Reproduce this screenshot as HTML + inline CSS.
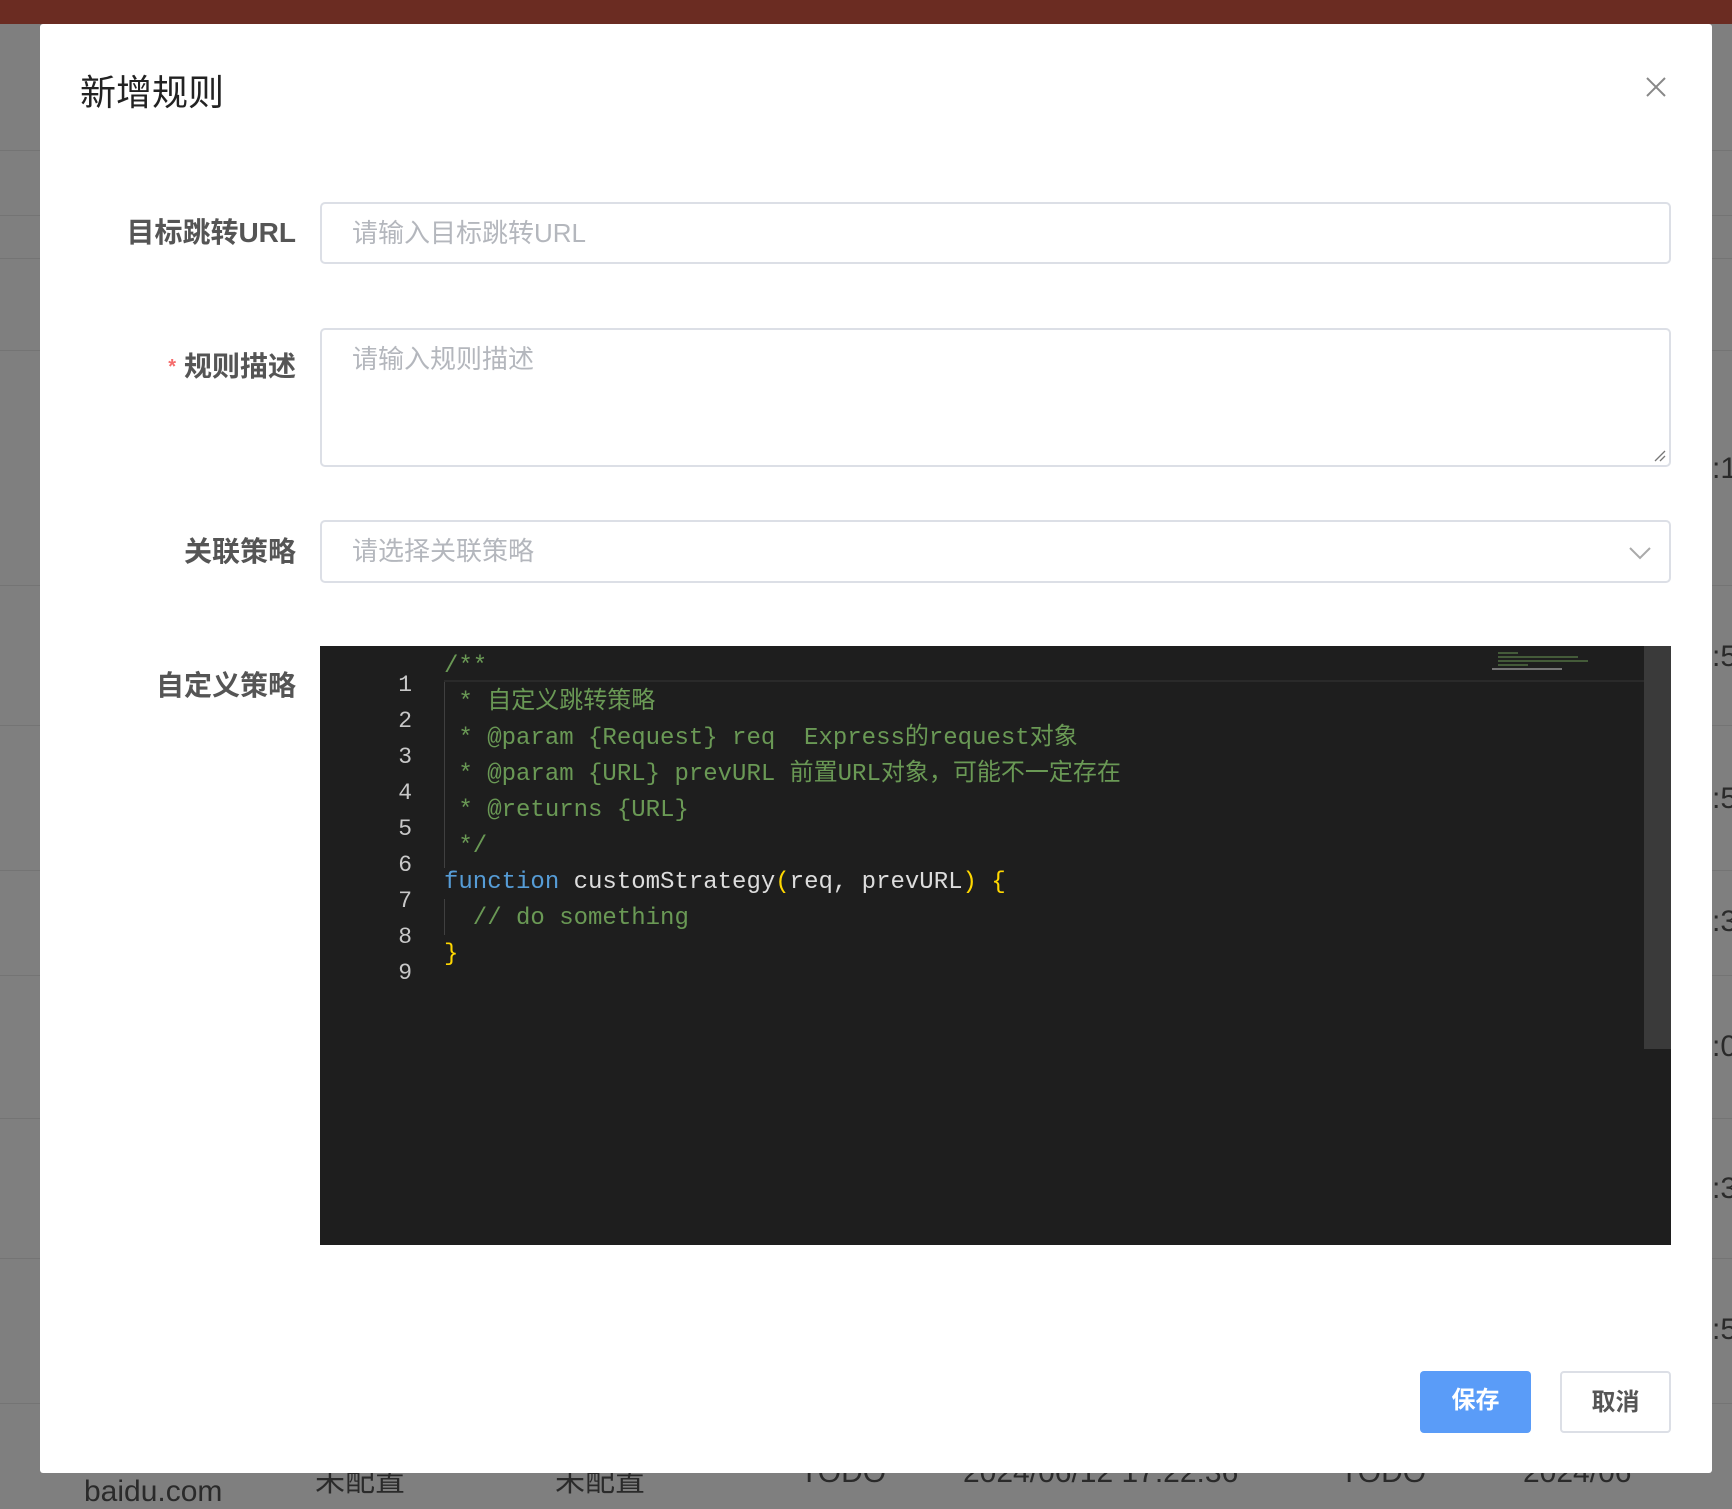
<!DOCTYPE html>
<html><head><meta charset="utf-8"><style>
*{margin:0;padding:0;box-sizing:border-box}
body{width:1732px;height:1498px;background:#7f7f7f;position:relative;overflow:hidden;font-family:"Liberation Sans","Noto Sans CJK SC",sans-serif}
.topbar{position:absolute;left:0;top:0;width:1732px;height:24px;background:#6b2c22}
.bgt{position:absolute;color:#2a2a2a;font-size:30px}
.hl{position:absolute;left:0;width:1732px;height:1px;background:#747474}
.modal{position:absolute;left:40px;top:24px;width:1672px;height:1449px;background:#fff;border-radius:3px}
.title{position:absolute;left:80px;top:64px;font-size:36px;color:#222}
.close{position:absolute;left:1645px;top:76px}
.lbl{position:absolute;right:1436px;font-size:28px;font-weight:bold;color:#555;white-space:nowrap;line-height:36px}
.lbl .s{color:#f56c6c;font-size:20px;margin-right:8px;vertical-align:3px}
.inp{position:absolute;left:320px;width:1351px;border:2px solid #dcdfe6;border-radius:5px;background:#fff}
.ph{position:absolute;left:30px;font-size:26px;color:#b4b7bd;white-space:nowrap;line-height:34px}
.ed{position:absolute;left:320px;top:646px;width:1351px;height:599px;background:#1e1e1e;overflow:hidden}
.ln{position:absolute;left:0;width:92px;text-align:right;font-family:"Liberation Mono",monospace;font-size:23px;color:#c8c8c8;line-height:36px}
.cl{position:absolute;left:124px;font-family:"Liberation Mono","Noto Sans CJK SC",monospace;font-size:24px;color:#6a9955;white-space:pre;line-height:36px;height:36px}
.btn{position:absolute;top:1371px;height:62px;width:111px;border-radius:4px;font-size:24px;font-weight:bold;text-align:center;line-height:60px}
</style></head><body>
<div class="topbar"></div>
<div class="hl" style="top:150px"></div><div class="hl" style="top:215px"></div><div class="hl" style="top:258px"></div>
<div class="hl" style="top:350px"></div><div class="hl" style="top:585px"></div><div class="hl" style="top:725px"></div>
<div class="hl" style="top:870px"></div><div class="hl" style="top:975px"></div><div class="hl" style="top:1118px"></div>
<div class="hl" style="top:1258px"></div><div class="hl" style="top:1403px"></div>
<div class="bgt" style="left:1712px;top:452px">:1</div>
<div class="bgt" style="left:1712px;top:640px">:5</div>
<div class="bgt" style="left:1712px;top:782px">:5</div>
<div class="bgt" style="left:1712px;top:905px">:3</div>
<div class="bgt" style="left:1712px;top:1030px">:0</div>
<div class="bgt" style="left:1712px;top:1172px">:3</div>
<div class="bgt" style="left:1712px;top:1313px">:5</div>
<div class="bgt" style="left:84px;top:1475px">baidu.com</div>
<div class="bgt" style="left:315px;top:1456px">未配置</div>
<div class="bgt" style="left:555px;top:1456px">未配置</div>
<div class="bgt" style="left:800px;top:1456px">TODO</div>
<div class="bgt" style="left:963px;top:1456px">2024/06/12 17:22:36</div>
<div class="bgt" style="left:1340px;top:1456px">TODO</div>
<div class="bgt" style="left:1523px;top:1456px">2024/06</div>
<div class="modal"></div>
<div class="title">新增规则</div>
<svg class="close" width="22" height="22" viewBox="0 0 22 22"><path d="M2 2L20 20M20 2L2 20" stroke="#888" stroke-width="2"/></svg>

<div class="lbl" style="top:215px">目标跳转URL</div>
<div class="inp" style="top:202px;height:62px"><div class="ph" style="top:12px">请输入目标跳转URL</div></div>

<div class="lbl" style="top:349px"><span class="s">*</span>规则描述</div>
<div class="inp" style="top:328px;height:139px"><div class="ph" style="top:12px">请输入规则描述</div>
<svg style="position:absolute;right:2px;bottom:2px" width="14" height="14"><path d="M2 12L12 2M7 12L12 7" stroke="#777" stroke-width="1.3"/></svg></div>

<div class="lbl" style="top:534px">关联策略</div>
<div class="inp" style="top:520px;height:63px"><div class="ph" style="top:12px">请选择关联策略</div>
<svg style="position:absolute;left:1306px;top:24px" width="24" height="14"><path d="M2 2L12 12L22 2" stroke="#aaa" stroke-width="2" fill="none"/></svg></div>

<div class="lbl" style="top:668px">自定义策略</div>
<div class="ed">
<div style="position:absolute;left:124px;top:34px;width:1360px;height:2px;background:#2a2a2a"></div>
<div style="position:absolute;left:124px;top:36px;width:1px;height:186px;background:#404040"></div>
<div style="position:absolute;left:124px;top:253px;width:1px;height:36px;background:#404040"></div>
<div style="position:absolute;left:1324px;top:0;width:27px;height:403px;background:#3a3a3a"></div>
<div style="position:absolute;left:1172px;top:4px;width:100px;height:30px;opacity:.5">
<div style="height:2px;width:20px;background:#6a9955;margin:2px 6px"></div><div style="height:2px;width:80px;background:#6a9955;margin:2px 6px"></div><div style="height:2px;width:90px;background:#6a9955;margin:2px 6px"></div><div style="height:2px;width:30px;background:#6a9955;margin:2px 6px"></div><div style="height:2px;width:70px;background:#ccc;margin:2px 0"></div></div>
<div class="ln" style="top:21px">1</div><div class="ln" style="top:57px">2</div><div class="ln" style="top:93px">3</div>
<div class="ln" style="top:129px">4</div><div class="ln" style="top:165px">5</div><div class="ln" style="top:201px">6</div>
<div class="ln" style="top:237px">7</div><div class="ln" style="top:273px">8</div><div class="ln" style="top:309px">9</div>
<div class="cl" style="top:3px">/**</div>
<div class="cl" style="top:39px"> * 自定义跳转策略</div>
<div class="cl" style="top:75px"> * @param {Request} req  Express的request对象</div>
<div class="cl" style="top:111px"> * @param {URL} prevURL 前置URL对象，可能不一定存在</div>
<div class="cl" style="top:147px"> * @returns {URL}</div>
<div class="cl" style="top:183px"> */</div>
<div class="cl" style="top:219px;color:#ddd"><span style="color:#569cd6">function</span> customStrategy<span style="color:#ffd700">(</span>req, prevURL<span style="color:#ffd700">)</span> <span style="color:#ffd700">{</span></div>
<div class="cl" style="top:255px">  // do something</div>
<div class="cl" style="top:291px;color:#ffd700">}</div>
</div>

<div class="btn" style="left:1420px;background:#5a9cf8;color:#fff">保存</div>
<div class="btn" style="left:1560px;border:2px solid #dcdfe6;color:#555;background:#fff">取消</div>
</body></html>
